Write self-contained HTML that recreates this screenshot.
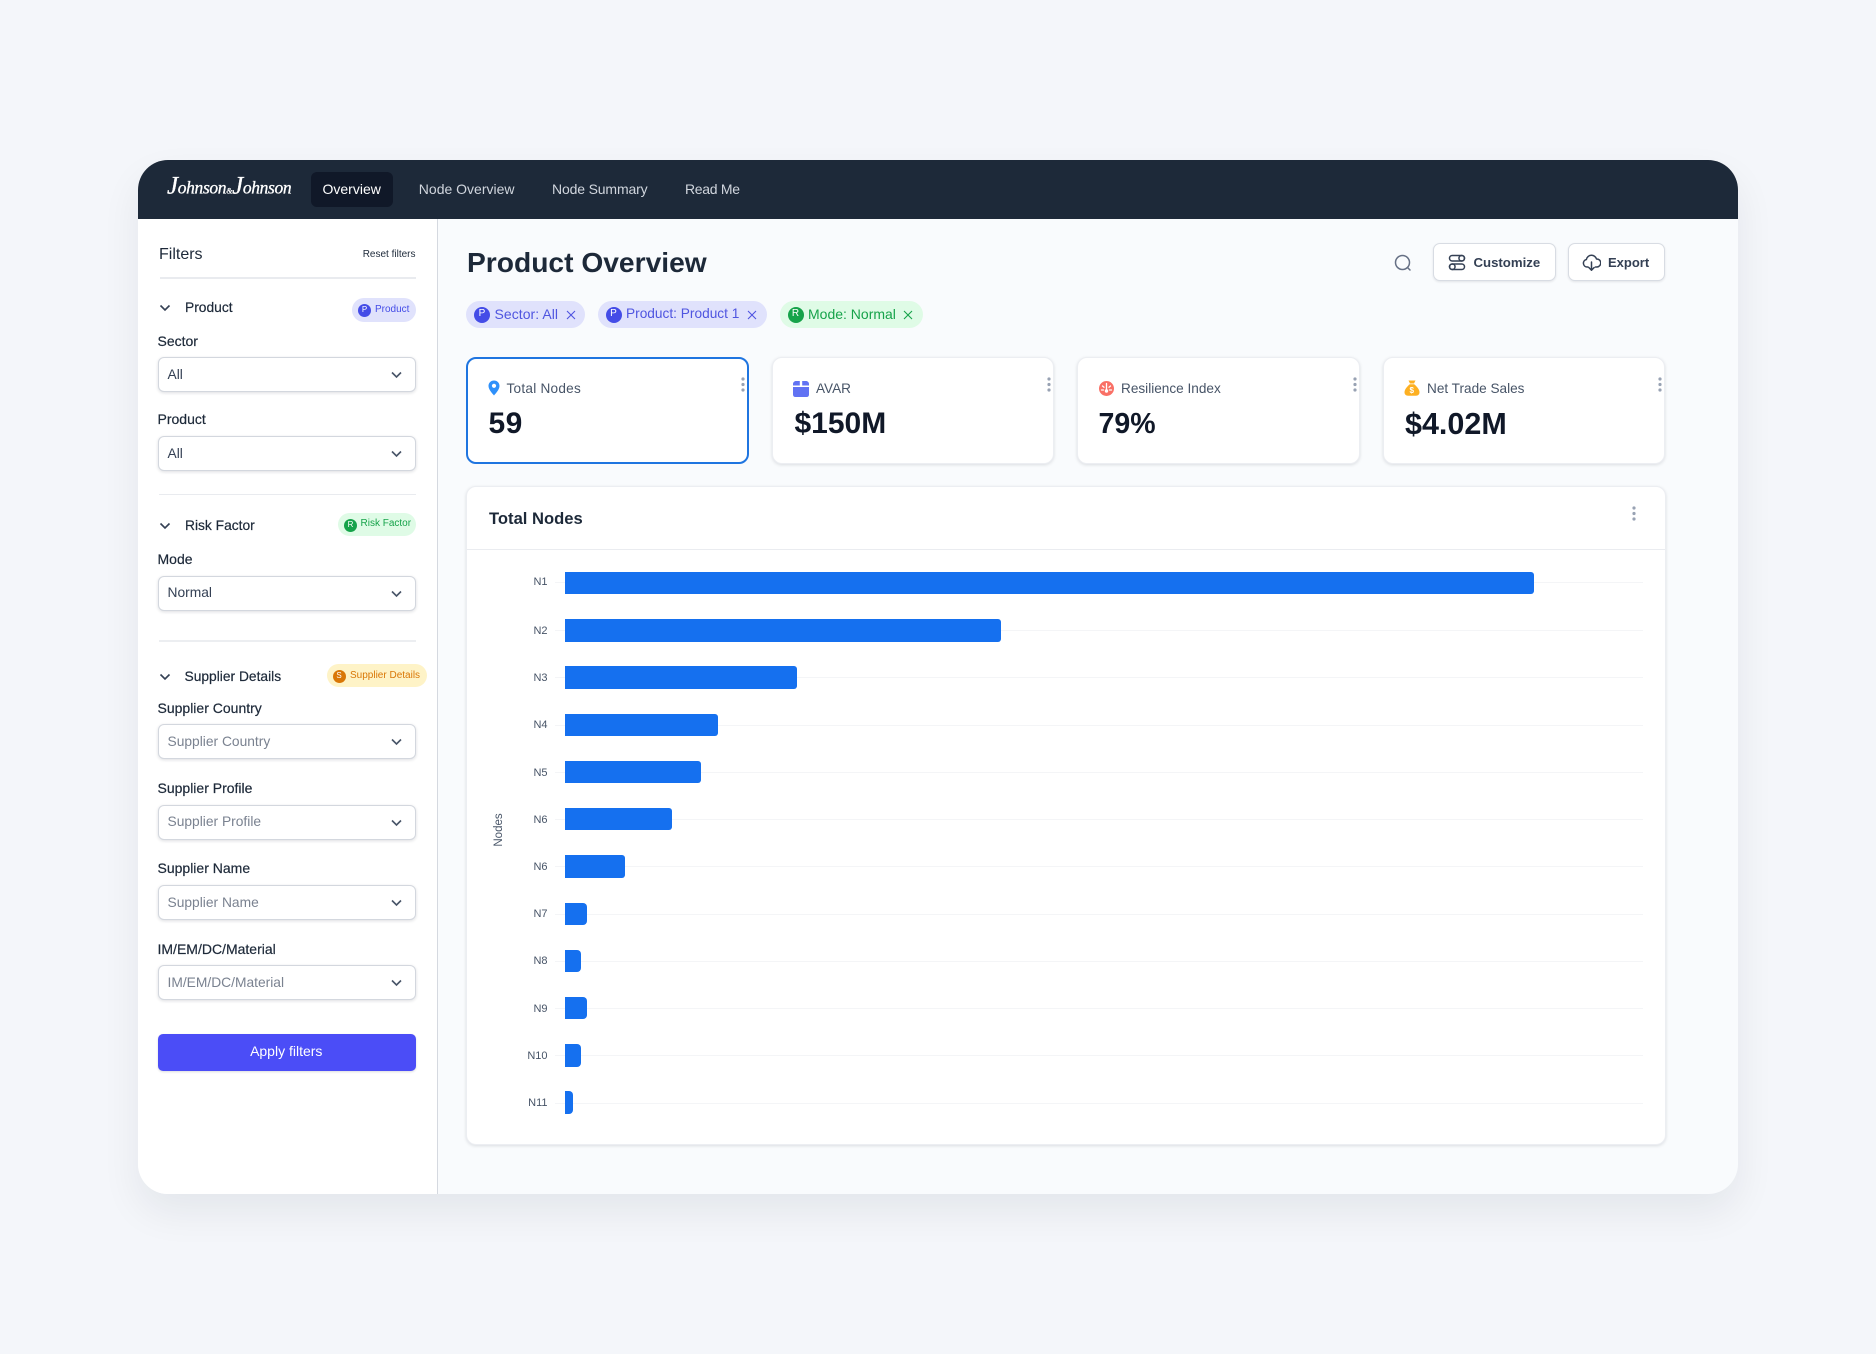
<!DOCTYPE html>
<html lang="en">
<head>
<meta charset="utf-8">
<title>Product Overview</title>
<style>
*{box-sizing:border-box;margin:0;padding:0}
html,body{width:1876px;height:1354px;overflow:hidden;background:#f4f6fa;font-family:"Liberation Sans",sans-serif}
body{position:relative}
.a{position:absolute}
.t{position:absolute;white-space:nowrap;transform:translateY(-50%);line-height:20px}
.nav{color:#d0d5dd;font-size:14px}
.lab{font-size:14px;color:#1d2939;-webkit-text-stroke:.2px #1d2939}
.sec{font-size:13.8px;color:#1d2939;-webkit-text-stroke:.2px #1d2939}
.sel{position:absolute;left:157.5px;width:258.5px;height:35px;background:#fff;border:1px solid #d3d7de;border-radius:6px;box-shadow:0 1px 3px rgba(16,24,40,.14)}
.sel span{position:absolute;left:9px;top:50%;transform:translateY(-50%);font-size:13.8px;line-height:20px;white-space:nowrap;color:#344054}
.sel span.ph{color:#7a8290}
.sel svg{position:absolute;left:232px;top:13px}
.badge{position:absolute;border-radius:13px}
.dot{position:absolute;border-radius:50%;color:#fff;text-align:center;font-size:9px}
.chip{position:absolute;top:301px;height:27px;border-radius:14px}
.ctext{font-size:14px}
.card{position:absolute;top:356.5px;width:282.5px;height:107.5px;background:#fff;border:1px solid #eceef2;border-radius:10px;box-shadow:0 1px 3px rgba(16,24,40,.13)}
.cl{font-size:13.6px;color:#475467}
.cv{font-size:30px;font-weight:700;color:#101828;line-height:36px}
.btn{position:absolute;top:243px;height:38px;background:#fff;border:1px solid #d8dce3;border-radius:7px;box-shadow:0 1px 2px rgba(16,24,40,.1)}
.btxt{font-size:13.2px;font-weight:700;color:#344054}
.bar{position:absolute;left:565px;height:22.4px;background:#1570ef;border-radius:0 3px 3px 0}
.g{position:absolute;left:555px;width:1088px;height:1px;background:#f4f5f7}
.nl{font-size:11px;color:#475467;text-align:right;left:auto;right:1328.5px}
</style>
</head>
<body>
<!-- app shell -->
<div class="a" style="left:138px;top:160px;width:1600px;height:1034px;border-radius:30px;background:#f9fbfd;box-shadow:0 18px 40px rgba(16,24,40,.07)"></div>
<div class="a" style="left:138px;top:219px;width:300px;height:975px;background:#fff;border-right:1px solid #d5d9e0;border-radius:0 0 0 30px"></div>
<div class="a" style="left:138px;top:160px;width:1600px;height:59px;background:#1d2939;border-radius:30px 30px 0 0"></div>

<!-- logo -->
<div class="t" style="left:167px;top:188.5px;color:#fff;font-family:'Liberation Serif',serif;font-style:italic;font-size:17.5px;letter-spacing:-.35px;-webkit-text-stroke:.3px #fff"><span style="font-size:25px">J</span>ohnson<span style="font-size:8px">&amp;</span><span style="font-size:25px">J</span>ohnson</div>

<!-- nav -->
<div class="a" style="left:311px;top:172px;width:82px;height:35px;border-radius:6px;background:#101828"></div>
<div class="t nav" style="left:322.5px;top:189px;color:#fff">Overview</div>
<div class="t nav" style="left:418.8px;top:189px">Node Overview</div>
<div class="t nav" style="left:552px;top:189px;letter-spacing:-.15px">Node Summary</div>
<div class="t nav" style="left:685px;top:189px;letter-spacing:-.3px">Read Me</div>

<!-- sidebar -->
<div class="t" style="left:159px;top:255px;font-size:16px;color:#1d2939">Filters</div>
<div class="t" style="right:1460.5px;top:255px;font-size:10px;color:#1d2939">Reset filters</div>
<div class="a" style="left:159.5px;top:277px;width:256px;height:2px;background:#e9ebef"></div>

<svg class="a" style="left:158.5px;top:304px" width="12" height="8" viewBox="0 0 12 8" fill="none"><path d="M1.5 1.5L6 6l4.500-4.500" stroke="#344054" stroke-width="1.6"/></svg>
<div class="t sec" style="left:185px;top:307.500px">Product</div>
<div class="badge" style="left:352px;top:298px;width:64px;height:24px;background:#e0e2fc"></div>
<div class="dot" style="left:358px;top:303.500px;width:13px;height:13px;background:#444ce7;line-height:12px;font-size:8px">P</div>
<div class="t" style="left:375px;top:310px;font-size:10px;color:#444ce7">Product</div>

<div class="t lab" style="left:157.500px;top:341px">Sector</div>
<div class="sel" style="top:357px"><span>All</span><svg width="11" height="8" viewBox="0 0 11 8" fill="none"><path d="M1 1.500L5.500 6 10 1.500" stroke="#475467" stroke-width="1.600"/></svg></div>
<div class="t lab" style="left:157.500px;top:419px">Product</div>
<div class="sel" style="top:436px"><span>All</span><svg width="11" height="8" viewBox="0 0 11 8" fill="none"><path d="M1 1.500L5.500 6 10 1.500" stroke="#475467" stroke-width="1.600"/></svg></div>

<div class="a" style="left:159px;top:494px;width:257px;height:1px;background:#e9ebef"></div>

<svg class="a" style="left:158.5px;top:522px" width="12" height="8" viewBox="0 0 12 8" fill="none"><path d="M1.500 1.500L6 6l4.500-4.500" stroke="#344054" stroke-width="1.600"/></svg>
<div class="t sec" style="left:185px;top:526px">Risk Factor</div>
<div class="badge" style="left:338px;top:513px;width:78px;height:23px;background:#dffbe6"></div>
<div class="dot" style="left:344px;top:518.500px;width:13px;height:13px;background:#16a34a;line-height:12px;font-size:8px">R</div>
<div class="t" style="left:360.500px;top:524px;font-size:10px;color:#16a34a">Risk Factor</div>

<div class="t lab" style="left:157.500px;top:559px">Mode</div>
<div class="sel" style="top:575.500px"><span>Normal</span><svg width="11" height="8" viewBox="0 0 11 8" fill="none"><path d="M1 1.500L5.500 6 10 1.500" stroke="#475467" stroke-width="1.600"/></svg></div>

<div class="a" style="left:159px;top:640px;width:257px;height:2px;background:#eceef1"></div>

<svg class="a" style="left:158.5px;top:673px" width="12" height="8" viewBox="0 0 12 8" fill="none"><path d="M1.500 1.500L6 6l4.500-4.500" stroke="#344054" stroke-width="1.600"/></svg>
<div class="t sec" style="left:184.5px;top:677px">Supplier Details</div>
<div class="badge" style="left:327px;top:664px;width:100px;height:23px;background:#fef3c7"></div>
<div class="dot" style="left:332.500px;top:669.500px;width:13px;height:13px;background:#d97706;line-height:12px;font-size:8px">S</div>
<div class="t" style="left:350px;top:675.500px;font-size:10px;color:#d97706">Supplier Details</div>

<div class="t lab" style="left:157.500px;top:707.500px">Supplier Country</div>
<div class="sel" style="top:724px"><span class="ph">Supplier Country</span><svg width="11" height="8" viewBox="0 0 11 8" fill="none"><path d="M1 1.500L5.500 6 10 1.500" stroke="#475467" stroke-width="1.600"/></svg></div>
<div class="t lab" style="left:157.500px;top:788px">Supplier Profile</div>
<div class="sel" style="top:804.500px"><span class="ph">Supplier Profile</span><svg width="11" height="8" viewBox="0 0 11 8" fill="none"><path d="M1 1.500L5.500 6 10 1.500" stroke="#475467" stroke-width="1.600"/></svg></div>
<div class="t lab" style="left:157.500px;top:868px">Supplier Name</div>
<div class="sel" style="top:885px"><span class="ph">Supplier Name</span><svg width="11" height="8" viewBox="0 0 11 8" fill="none"><path d="M1 1.500L5.500 6 10 1.500" stroke="#475467" stroke-width="1.600"/></svg></div>
<div class="t lab" style="left:157.500px;top:949px">IM/EM/DC/Material</div>
<div class="sel" style="top:965px"><span class="ph">IM/EM/DC/Material</span><svg width="11" height="8" viewBox="0 0 11 8" fill="none"><path d="M1 1.500L5.500 6 10 1.500" stroke="#475467" stroke-width="1.600"/></svg></div>

<div class="a" style="left:157.500px;top:1034px;width:258.500px;height:37px;background:#4b4df7;border-radius:5px;box-shadow:0 1px 2px rgba(16,24,40,.15);color:#fff;font-size:14px;line-height:35.5px;text-align:center;padding-right:1px">Apply filters</div>

<!-- header -->
<div class="t" style="left:467px;top:261.500px;font-size:28.2px;font-weight:700;color:#1d2939;line-height:34px">Product Overview</div>

<svg class="a" style="left:1393px;top:253px" width="20" height="20" viewBox="0 0 20 20" fill="none"><circle cx="9.500" cy="9.500" r="7" stroke="#667085" stroke-width="1.500"/><path d="M14.500 14.500l2.500 2.500" stroke="#667085" stroke-width="1.500" stroke-linecap="round"/></svg>

<div class="btn" style="left:1433px;width:123px"></div>
<svg class="a" style="left:1448px;top:254px" width="18" height="17" viewBox="0 0 18 17" fill="none" stroke="#344054" stroke-width="1.500"><rect x="1.500" y="1.500" width="15" height="5.500" rx="2.750"/><circle cx="13.700" cy="4.250" r="2.750"/><rect x="1.500" y="10" width="15" height="5.500" rx="2.750"/><circle cx="4.300" cy="12.750" r="2.750"/></svg>
<div class="t btxt" style="left:1473.500px;top:262.500px">Customize</div>

<div class="btn" style="left:1567.500px;width:97px"></div>
<svg class="a" style="left:1582px;top:253px" width="19" height="19" viewBox="0 0 19 19" fill="none" stroke="#344054" stroke-width="1.500" stroke-linecap="round" stroke-linejoin="round"><path d="M6 14H5a3.800 3.800 0 0 1-.6-7.500A5.200 5.200 0 0 1 14.500 6a4 4 0 0 1 .5 8h-1.500"/><path d="M9.500 9v8M6.800 14.500l2.700 2.700 2.700-2.700"/></svg>
<div class="t btxt" style="left:1608px;top:262.500px;font-size:13px">Export</div>

<!-- chips -->
<div class="chip" style="left:466px;width:119px;background:#e0e2fc"></div>
<div class="dot" style="left:474px;top:307px;width:16px;height:16px;background:#444ce7;line-height:14px;font-size:10px">P</div>
<div class="t ctext" style="left:494.500px;top:314px;color:#4f55e0;letter-spacing:.05px">Sector: All</div>
<svg class="a" style="left:566px;top:309.500px" width="10" height="10" viewBox="0 0 10 10" fill="none"><path d="M1 1l8 8M9 1l-8 8" stroke="#4f55e0" stroke-width="1.100"/></svg>

<div class="chip" style="left:598px;width:169px;background:#e0e2fc"></div>
<div class="dot" style="left:605.500px;top:307px;width:16px;height:16px;background:#444ce7;line-height:14px;font-size:10px">P</div>
<div class="t ctext" style="left:626px;top:314px;color:#4f55e0;font-size:13.7px">Product: Product 1</div>
<svg class="a" style="left:747px;top:309.500px" width="10" height="10" viewBox="0 0 10 10" fill="none"><path d="M1 1l8 8M9 1l-8 8" stroke="#4f55e0" stroke-width="1.100"/></svg>

<div class="chip" style="left:780px;width:143px;background:#dffbe6"></div>
<div class="dot" style="left:787.500px;top:307px;width:16px;height:16px;background:#16a34a;line-height:14px;font-size:10px">R</div>
<div class="t ctext" style="left:808px;top:314px;color:#16a34a">Mode: Normal</div>
<svg class="a" style="left:903px;top:309.500px" width="10" height="10" viewBox="0 0 10 10" fill="none"><path d="M1 1l8 8M9 1l-8 8" stroke="#16a34a" stroke-width="1.100"/></svg>

<!-- KPI cards -->
<div class="card" style="left:466px;border:2px solid #1f75e0;box-shadow:none"></div>
<svg class="a" style="left:487.500px;top:380px" width="12" height="16" viewBox="0 0 12 16"><path d="M6 0.500C2.800 0.500.5 2.900.5 6c0 3.800 4 7.500 5.500 9.500C7.500 13.500 11.500 9.800 11.500 6 11.500 2.900 9.200.5 6 .5z" fill="#2e90fa"/><circle cx="6" cy="5.800" r="2.100" fill="#fff"/></svg>
<div class="t cl" style="left:506.500px;top:388.500px;letter-spacing:.25px">Total Nodes</div>
<div class="t cv" style="left:488.500px;top:424px;letter-spacing:.4px">59</div>
<svg class="a" style="left:741px;top:377px" width="4" height="15" viewBox="0 0 4 15" fill="#98a2b3"><circle cx="2" cy="2" r="1.600"/><circle cx="2" cy="7.500" r="1.600"/><circle cx="2" cy="13" r="1.600"/></svg>

<div class="card" style="left:771.500px"></div>
<svg class="a" style="left:793px;top:380.500px" width="16" height="16" viewBox="0 0 16 16"><path d="M2.500 0H6.800V4.500H0V3Q0 .8 2.500 0zM9.200 0H13.500Q16 .8 16 3V4.500H9.200z" fill="#6172f3"/><path d="M0 6H16V13.500Q16 16 13.500 16H2.500Q0 16 0 13.500z" fill="#6172f3"/></svg>
<div class="t cl" style="left:816px;top:388.500px">AVAR</div>
<div class="t cv" style="left:794.500px;top:424px">$150M</div>
<svg class="a" style="left:1047px;top:377px" width="4" height="15" viewBox="0 0 4 15" fill="#98a2b3"><circle cx="2" cy="2" r="1.600"/><circle cx="2" cy="7.500" r="1.600"/><circle cx="2" cy="13" r="1.600"/></svg>

<div class="card" style="left:1077px"></div>
<svg class="a" style="left:1099px;top:380.500px" width="15" height="15" viewBox="0 0 15 15"><circle cx="7.500" cy="7.500" r="7.500" fill="#f97066"/><path d="M7.500 2.500v6M3.500 5l1.500 1.200M11.500 5L10 6.200M2.500 9h2M10.500 9h2" stroke="#fff" stroke-width="1.300" stroke-linecap="round"/><circle cx="7.500" cy="10" r="1.700" fill="#fff"/></svg>
<div class="t cl" style="left:1121px;top:388.500px">Resilience Index</div>
<div class="t cv" style="left:1098.500px;top:424px;font-size:28.500px">79%</div>
<svg class="a" style="left:1352.500px;top:377px" width="4" height="15" viewBox="0 0 4 15" fill="#98a2b3"><circle cx="2" cy="2" r="1.600"/><circle cx="2" cy="7.500" r="1.600"/><circle cx="2" cy="13" r="1.600"/></svg>

<div class="card" style="left:1382.500px"></div>
<svg class="a" style="left:1404px;top:380px" width="16" height="16" viewBox="0 0 16 16"><path d="M4.500 0.500h7l-1.500 3H6z" fill="#fdb022"/><path d="M5.800 4.200h4.400C13 6.500 15.500 9.500 15.500 12.300c0 2.400-1.700 3.400-3.500 3.400H4C2.200 15.700.5 14.700.5 12.300.5 9.500 3 6.500 5.800 4.200z" fill="#fdb022"/></svg>
<div class="t" style="left:1409.500px;top:390.500px;font-size:8px;font-weight:700;color:#fff;line-height:10px">$</div>
<div class="t cl" style="left:1427px;top:388.500px">Net Trade Sales</div>
<div class="t cv" style="left:1405px;top:424px;font-size:30.500px">$4.02M</div>
<svg class="a" style="left:1658px;top:377px" width="4" height="15" viewBox="0 0 4 15" fill="#98a2b3"><circle cx="2" cy="2" r="1.600"/><circle cx="2" cy="7.500" r="1.600"/><circle cx="2" cy="13" r="1.600"/></svg>

<!-- chart card -->
<div class="a" style="left:466px;top:485.500px;width:1199.500px;height:659.500px;background:#fff;border:1px solid #eceef2;border-radius:10px;box-shadow:0 1px 3px rgba(16,24,40,.13)"></div>
<div class="a" style="left:467px;top:549px;width:1197.500px;height:1px;background:#eaecf0"></div>
<div class="t" style="left:489px;top:518.500px;font-size:16.600px;font-weight:700;color:#1d2939">Total Nodes</div>
<svg class="a" style="left:1632px;top:506px" width="4" height="15" viewBox="0 0 4 15" fill="#98a2b3"><circle cx="2" cy="2" r="1.600"/><circle cx="2" cy="7.500" r="1.600"/><circle cx="2" cy="13" r="1.600"/></svg>

<div class="a" style="left:498.500px;top:830px;font-size:11.500px;color:#475467;line-height:14px;white-space:nowrap;transform:translate(-50%,-50%) rotate(-90deg)">Nodes</div>

<!-- grid lines -->
<div class="g" style="top:582px"></div>
<div class="g" style="top:630px"></div>
<div class="g" style="top:677px"></div>
<div class="g" style="top:724.500px"></div>
<div class="g" style="top:771.500px"></div>
<div class="g" style="top:819px"></div>
<div class="g" style="top:866px"></div>
<div class="g" style="top:913.500px"></div>
<div class="g" style="top:960.500px"></div>
<div class="g" style="top:1008px"></div>
<div class="g" style="top:1055px"></div>
<div class="g" style="top:1102.500px"></div>

<!-- bars -->
<div class="bar" style="top:572px;width:968.700px"></div>
<div class="bar" style="top:619.200px;width:435.800px"></div>
<div class="bar" style="top:666.400px;width:232.300px"></div>
<div class="bar" style="top:713.600px;width:152.700px"></div>
<div class="bar" style="top:760.900px;width:136px"></div>
<div class="bar" style="top:808.100px;width:107.300px"></div>
<div class="bar" style="top:855.300px;width:60px"></div>
<div class="bar" style="top:902.500px;width:22.300px;border-radius:0 4px 4px 0"></div>
<div class="bar" style="top:949.700px;width:15.700px;border-radius:0 4px 4px 0"></div>
<div class="bar" style="top:997px;width:22.300px;border-radius:0 4px 4px 0"></div>
<div class="bar" style="top:1044.200px;width:15.700px;border-radius:0 4px 4px 0"></div>
<div class="bar" style="top:1091.400px;width:7.700px;border-radius:0 4px 4px 0"></div>

<!-- y labels -->
<div class="t nl" style="top:581.500px">N1</div>
<div class="t nl" style="top:630.500px">N2</div>
<div class="t nl" style="top:678px">N3</div>
<div class="t nl" style="top:725px">N4</div>
<div class="t nl" style="top:773px">N5</div>
<div class="t nl" style="top:820px">N6</div>
<div class="t nl" style="top:866.500px">N6</div>
<div class="t nl" style="top:914px">N7</div>
<div class="t nl" style="top:961px">N8</div>
<div class="t nl" style="top:1009px">N9</div>
<div class="t nl" style="top:1056px">N10</div>
<div class="t nl" style="top:1102.500px">N11</div>
</body>
</html>
